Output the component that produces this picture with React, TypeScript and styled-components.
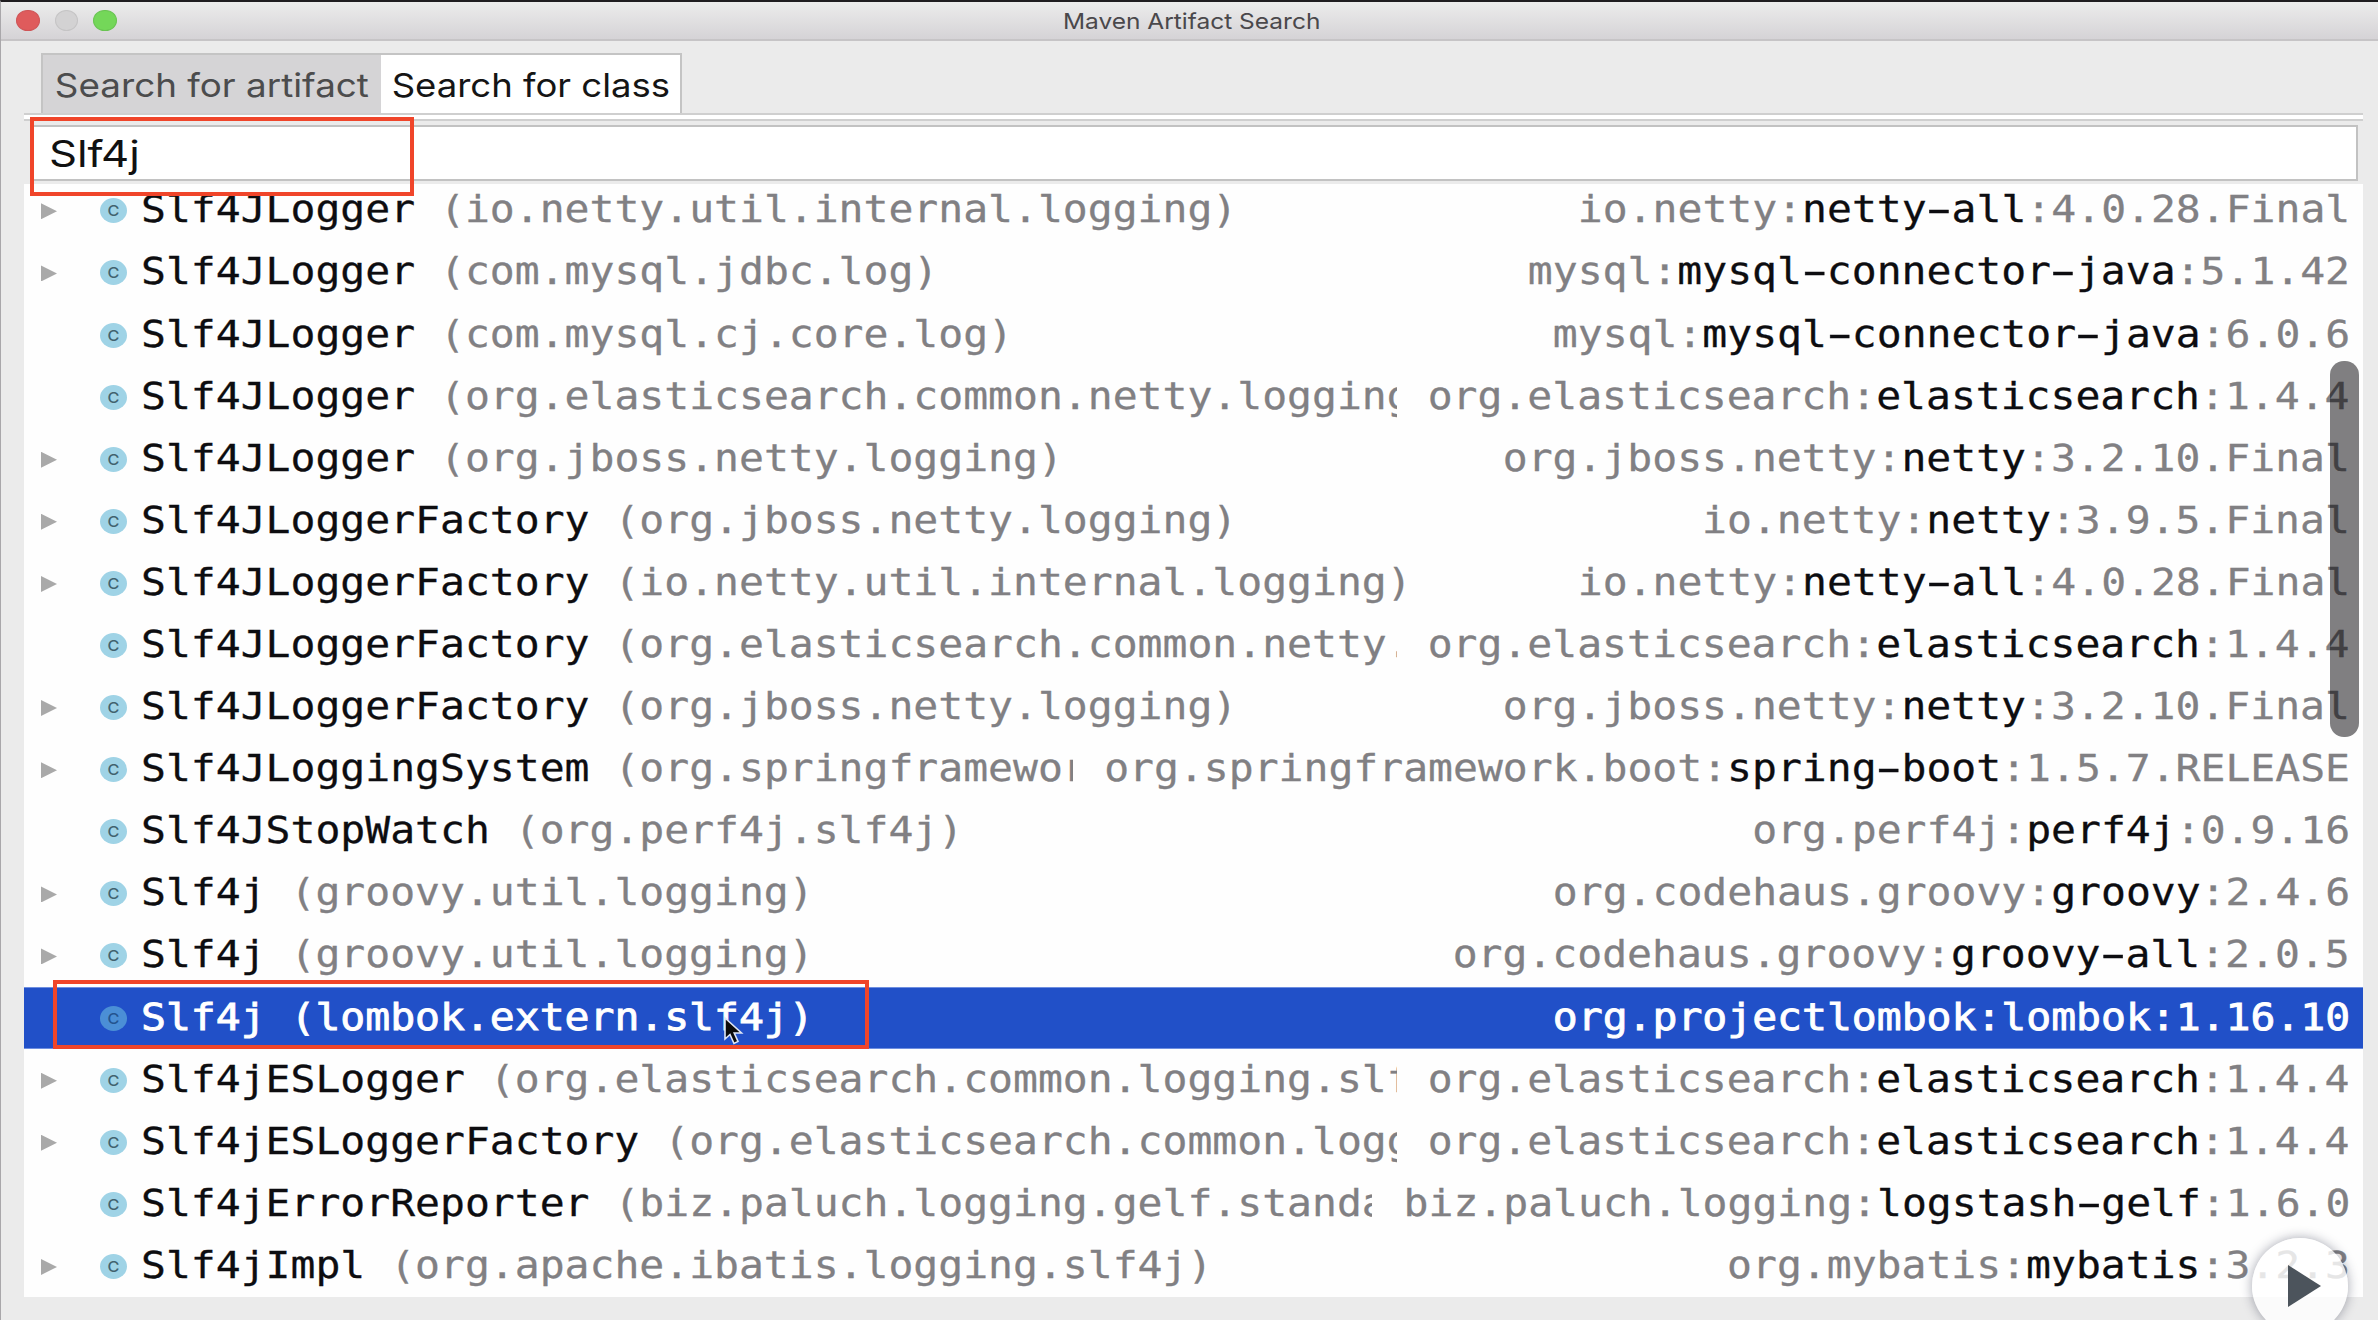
import React from "react";
import styled, { createGlobalStyle } from "styled-components";

const MONO = '"DejaVu Sans Mono", "Liberation Mono", monospace';
const UI = 'Inter, "Liberation Sans", sans-serif';
const STRETCH = 1.089;

const GlobalStyle = createGlobalStyle`
  *, *::before, *::after { box-sizing: border-box; }
  body { margin: 0; background: #ebebeb; overflow: hidden; }
`;

const Window = styled.div`
  position: relative;
  display: flex;
  flex-direction: column;
  width: 2378px;
  height: 1320px;
  overflow: hidden;
  background: #ebebeb;
  border-top: 2px solid #1f1d20;
  border-left: 1px solid #a9a7aa;
  font-family: ${UI};
`;

const TitleBar = styled.header`
  display: grid;
  grid-template-columns: 1fr auto 1fr;
  align-items: center;
  flex: none;
  height: 39px;
  padding: 0 15px;
  background: linear-gradient(#ececec, #d5d3d6);
  border-bottom: 2px solid #c6c4c6;
`;

const Lights = styled.div`
  display: flex;
  gap: 15px;
`;

const Light = styled.span<{ $fill: string; $edge: string }>`
  width: 23.5px;
  height: 21.5px;
  border-radius: 50%;
  background: ${(p) => p.$fill};
  border: 1px solid ${(p) => p.$edge};
`;

const Title = styled.h1`
  margin: 0;
  font-size: 22px;
  line-height: 30px;
  font-weight: 400;
  color: #4a484b;
  transform: translateX(2px) scaleX(1.113);
`;

const Tabs = styled.nav`
  display: flex;
  flex: none;
  height: 60px;
  margin: 12px 0 0 40px;
`;

const Tab = styled.button<{ $active?: boolean; $width: number }>`
  display: flex;
  align-items: center;
  justify-content: center;
  width: ${(p) => p.$width}px;
  height: ${(p) => (p.$active ? 62 : 60)}px;
  padding: ${(p) => (p.$active ? "0 0 1px 1px" : "1px 0 0")};
  border: 2px solid #c4c4c4;
  border-bottom: 0;
  border-left-width: ${(p) => (p.$active ? 0 : 2)}px;
  border-right-width: ${(p) => (p.$active ? 2 : 0)}px;
  background: ${(p) => (p.$active ? "#ffffff" : "#d5d4d6")};
  color: ${(p) => (p.$active ? "#151515" : "#4c4c4d")};
  font: 400 33px/40px ${UI};
  white-space: nowrap;
`;

const Stretched = styled.span<{ $by: number; $from?: string }>`
  display: inline-block;
  transform: scaleX(${(p) => p.$by});
  transform-origin: ${(p) => p.$from || "center"};
`;

const TabRule = styled.div`
  flex: none;
  height: 8px;
  margin: 0 15px 0 23px;
  background: #ffffff;
  border-top: 2px solid #cfcfcf;
  border-bottom: 2px solid #cfcfcf;
`;

const Field = styled.div`
  display: flex;
  align-items: center;
  flex: none;
  height: 56px;
  margin: 4px 20px 0 29px;
  padding: 2px 0 0 17px;
  background: #ffffff;
  border: 2px solid #c2c2c2;
  color: #111111;
  font-size: 37px;
  line-height: 44px;
`;

const List = styled.ul`
  display: flex;
  flex-direction: column;
  justify-content: flex-end;
  flex: none;
  height: 1113px;
  margin: 3px 15px 0 23px;
  padding: 0;
  overflow: hidden;
  list-style: none;
  background: #fefefe;
`;

const Row = styled.li<{ $selected?: boolean }>`
  display: flex;
  align-items: center;
  flex: none;
  height: 62.1px;
  padding: 0 13px 0 17px;
  font-family: ${MONO};
  font-size: 38px;
  line-height: 60px;
  white-space: pre;
  background: ${(p) => (p.$selected ? "#2150c8" : "transparent")};
  box-shadow: ${(p) => (p.$selected ? "inset 0 1px #6f8fe0, inset 0 -1px #6f8fe0" : "none")};
  color: ${(p) => (p.$selected ? "#ffffff" : "#0d0d10")};
  -webkit-text-stroke: ${(p) => (p.$selected ? "0.9px" : "0.3px")};
  --muted: ${(p) => (p.$selected ? "#ffffff" : "#818083")};
`;

const Disclosure = styled.span<{ $shown: boolean }>`
  flex: none;
  width: 16px;
  height: 16px;
  margin-top: 2px;
  background: #a9a9a9;
  clip-path: polygon(0 0, 100% 50%, 0 100%);
  visibility: ${(p) => (p.$shown ? "visible" : "hidden")};
`;

const ClassBadge = styled.span<{ $selected?: boolean }>`
  display: flex;
  align-items: center;
  justify-content: center;
  flex: none;
  width: 27px;
  height: 25px;
  margin: 1px 14px 0 43px;
  border-radius: 50%;
  background: ${(p) => (p.$selected ? "#4b8fd6" : "#9fd3e6")};
  color: ${(p) => (p.$selected ? "#24548f" : "#41626f")};
  font: 500 15px/25px ${UI};
  -webkit-text-stroke: 0;
`;

const NameCell = styled.span`
  flex: 1;
  min-width: 0;
  height: 62px;
  overflow: hidden;
`;

const ArtifactCell = styled.span<{ $chars: number }>`
  display: flex;
  justify-content: flex-end;
  flex: none;
  width: calc(${(p) => p.$chars}ch * ${STRETCH});
  height: 62px;
  margin-left: 31px;
`;

const Muted = styled.span`
  color: var(--muted);
`;

const Dash = styled.span`
  display: inline-block;
  transform: scaleX(1.8);
`;

const ScrollThumb = styled.div`
  position: absolute;
  left: 2329px;
  top: 359px;
  width: 29px;
  height: 376px;
  border-radius: 14px;
  background: rgba(2, 0, 4, 0.5);
`;

const Marker = styled.div<{ $x: number; $y: number; $w: number; $h: number }>`
  position: absolute;
  left: ${(p) => p.$x}px;
  top: ${(p) => p.$y}px;
  width: ${(p) => p.$w}px;
  height: ${(p) => p.$h}px;
  border: 4px solid #f0452a;
`;

const Pointer = styled.svg`
  position: absolute;
  left: 721px;
  top: 1013px;
`;

const PlayButton = styled.button`
  position: absolute;
  left: 2251px;
  top: 1236px;
  display: flex;
  align-items: center;
  justify-content: center;
  width: 96px;
  height: 96px;
  padding: 0;
  border: 0;
  border-radius: 50%;
  background: rgba(255, 255, 255, 0.8);
  box-shadow: 0 0 12px rgba(30, 35, 60, 0.4);
`;

type Entry = {
  name: string;
  pkg: string;
  group: string;
  artifact: string;
  version: string;
  open?: boolean;
  selected?: boolean;
};

const entries: Entry[] = [
  { name: "Slf4JLogger", pkg: "(io.netty.util.internal.logging)", group: "io.netty", artifact: "netty-all", version: "4.0.28.Final", open: true },
  { name: "Slf4JLogger", pkg: "(com.mysql.jdbc.log)", group: "mysql", artifact: "mysql-connector-java", version: "5.1.42", open: true },
  { name: "Slf4JLogger", pkg: "(com.mysql.cj.core.log)", group: "mysql", artifact: "mysql-connector-java", version: "6.0.6" },
  { name: "Slf4JLogger", pkg: "(org.elasticsearch.common.netty.logging)", group: "org.elasticsearch", artifact: "elasticsearch", version: "1.4.4" },
  { name: "Slf4JLogger", pkg: "(org.jboss.netty.logging)", group: "org.jboss.netty", artifact: "netty", version: "3.2.10.Final", open: true },
  { name: "Slf4JLoggerFactory", pkg: "(org.jboss.netty.logging)", group: "io.netty", artifact: "netty", version: "3.9.5.Final", open: true },
  { name: "Slf4JLoggerFactory", pkg: "(io.netty.util.internal.logging)", group: "io.netty", artifact: "netty-all", version: "4.0.28.Final", open: true },
  { name: "Slf4JLoggerFactory", pkg: "(org.elasticsearch.common.netty.logging)", group: "org.elasticsearch", artifact: "elasticsearch", version: "1.4.4" },
  { name: "Slf4JLoggerFactory", pkg: "(org.jboss.netty.logging)", group: "org.jboss.netty", artifact: "netty", version: "3.2.10.Final", open: true },
  { name: "Slf4JLoggingSystem", pkg: "(org.springframework.boot.logging)", group: "org.springframework.boot", artifact: "spring-boot", version: "1.5.7.RELEASE", open: true },
  { name: "Slf4JStopWatch", pkg: "(org.perf4j.slf4j)", group: "org.perf4j", artifact: "perf4j", version: "0.9.16" },
  { name: "Slf4j", pkg: "(groovy.util.logging)", group: "org.codehaus.groovy", artifact: "groovy", version: "2.4.6", open: true },
  { name: "Slf4j", pkg: "(groovy.util.logging)", group: "org.codehaus.groovy", artifact: "groovy-all", version: "2.0.5", open: true },
  { name: "Slf4j", pkg: "(lombok.extern.slf4j)", group: "org.projectlombok", artifact: "lombok", version: "1.16.10", selected: true },
  { name: "Slf4jESLogger", pkg: "(org.elasticsearch.common.logging.slf4j)", group: "org.elasticsearch", artifact: "elasticsearch", version: "1.4.4", open: true },
  { name: "Slf4jESLoggerFactory", pkg: "(org.elasticsearch.common.logging.slf4j)", group: "org.elasticsearch", artifact: "elasticsearch", version: "1.4.4", open: true },
  { name: "Slf4jErrorReporter", pkg: "(biz.paluch.logging.gelf.standalone)", group: "biz.paluch.logging", artifact: "logstash-gelf", version: "1.6.0" },
  { name: "Slf4jImpl", pkg: "(org.apache.ibatis.logging.slf4j)", group: "org.mybatis", artifact: "mybatis", version: "3.2.3", open: true },
];

function Artifact({ text }: { text: string }) {
  return (
    <>
      {text.split(/(-)/).map((part, i) => (part === "-" ? <Dash key={i}>-</Dash> : part))}
    </>
  );
}

function EntryRow({ entry }: { entry: Entry }) {
  const chars = entry.group.length + entry.artifact.length + entry.version.length + 2;
  return (
    <Row $selected={entry.selected}>
      <Disclosure $shown={!!entry.open} />
      <ClassBadge $selected={entry.selected}>
        <Stretched $by={1.08}>C</Stretched>
      </ClassBadge>
      <NameCell>
        <Stretched $by={STRETCH} $from="left">
          {entry.name} <Muted>{entry.pkg}</Muted>
        </Stretched>
      </NameCell>
      <ArtifactCell $chars={chars}>
        <Stretched $by={STRETCH} $from="right">
          <Muted>{entry.group}:</Muted>
          <Artifact text={entry.artifact} />
          <Muted>:{entry.version}</Muted>
        </Stretched>
      </ArtifactCell>
    </Row>
  );
}

export default function App() {
  return (
    <>
      <GlobalStyle />
      <Window>
        <TitleBar>
          <Lights>
            <Light $fill="#df5b5c" $edge="#cf5557" />
            <Light $fill="#d3d2d3" $edge="#c5c4c5" />
            <Light $fill="#74d759" $edge="#69c452" />
          </Lights>
          <Title>Maven Artifact Search</Title>
        </TitleBar>
        <Tabs>
          <Tab $width={340}>
            <Stretched $by={1.115}>Search for artifact</Stretched>
          </Tab>
          <Tab $width={301} $active>
            <Stretched $by={1.106}>Search for class</Stretched>
          </Tab>
        </Tabs>
        <TabRule />
        <Field>
          <Stretched $by={1.18} $from="left">Slf4j</Stretched>
        </Field>
        <List>
          {entries.map((entry, i) => (
            <EntryRow key={i} entry={entry} />
          ))}
        </List>
        <ScrollThumb />
        <Marker $x={29} $y={115} $w={384} $h={79} />
        <Marker $x={52} $y={978} $w={816} $h={69} />
        <Pointer width="24" height="32" viewBox="0 0 24 32">
          <path
            d="M3 3 L3 24 L8 19.5 L12 28.5 L16 26.5 L12.2 18 L19.5 18 Z"
            fill="#0b0b0b"
            stroke="#dfe6f5"
            strokeWidth="1.6"
          />
        </Pointer>
        <PlayButton aria-label="Play">
          <svg width="96" height="96" viewBox="0 0 96 96">
            <path d="M36 27 L69 48 L36 69 Z" fill="#4c545c" />
          </svg>
        </PlayButton>
      </Window>
    </>
  );
}
